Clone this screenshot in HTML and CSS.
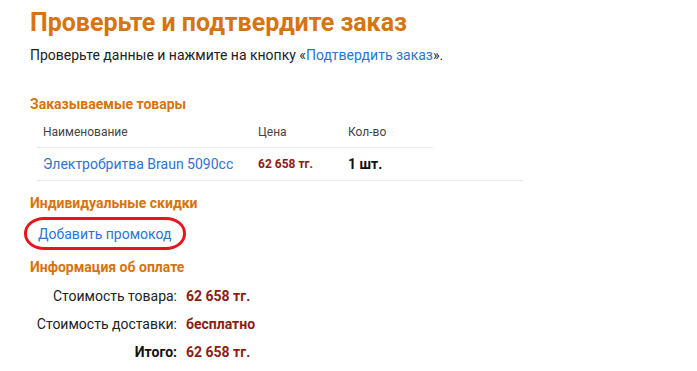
FILE: index.html
```html
<!DOCTYPE html>
<html lang="ru">
<head>
<meta charset="utf-8">
<link rel="stylesheet" href="styles.css">
</head>
<body>
<div class="page">
  <h1 class="title">Проверьте и подтвердите заказ</h1>
  <p class="intro">Проверьте данные и нажмите на кнопку «<a class="link" href="#">Подтвердить заказ</a>».</p>

  <h2 class="section">Заказываемые товары</h2>
  <div class="items">
    <div class="row head">
      <div class="c-name">Наименование</div>
      <div class="c-price">Цена</div>
      <div class="c-qty">Кол-во</div>
    </div>
    <div class="row item">
      <div class="c-name"><a class="link" href="#">Электробритва Braun 5090cc</a></div>
      <div class="c-price price">62 658 тг.</div>
      <div class="c-qty qty">1 шт.</div>
    </div>
  </div>

  <h2 class="section">Индивидуальные скидки</h2>
  <div class="promo"><a class="link" href="#">Добавить промокод</a></div>

  <h2 class="section">Информация об оплате</h2>
  <div class="pay">
    <div class="pay-label">Стоимость товара:</div><div class="pay-value">62 658 тг.</div>
    <div class="pay-label">Стоимость доставки:</div><div class="pay-value">бесплатно</div>
    <div class="pay-label total">Итого:</div><div class="pay-value">62 658 тг.</div>
  </div>
</div>
</body>
</html>
```

FILE: styles.css
```css
html, body {
  margin: 0;
  padding: 0;
  background: #ffffff;
}
body {
  font-family: Roboto, "Liberation Sans", sans-serif;
  color: #222222;
}
*, *::before, *::after {
  box-sizing: border-box;
}
.page {
  padding: 8px 0 0 30px;
}
.title {
  margin: 0;
  font-size: 25px;
  font-weight: 700;
  color: #d6740e;
  line-height: 30px;
}
.intro {
  margin: 9px 0 0 0;
  font-size: 14px;
  line-height: 16px;
}
.link {
  color: #2a76d2;
  text-decoration: none;
}
.section {
  margin: 0;
  font-size: 14px;
  font-weight: 700;
  color: #d6740e;
  line-height: 16px;
}
.intro + .section {
  margin-top: 33px;
}
.items {
  margin: 4px 0 0 7px;
  width: 486px;
}
.row {
  display: flex;
}
.head {
  width: 396px;
  height: 32px;
  align-items: center;
  border-bottom: 1px solid #ececec;
  font-size: 12px;
  color: #444444;
}
.item {
  height: 33px;
  align-items: center;
  border-bottom: 1px solid #ececec;
  font-size: 14px;
}
.c-name {
  width: 221px;
  padding-left: 6px;
}
.c-price {
  width: 90px;
}
.price {
  font-size: 12px;
  font-weight: 700;
  color: #8e1c12;
}
.qty {
  font-weight: 700;
  color: #111111;
}
.items + .section {
  margin-top: 14px;
}
.promo {
  margin: 6px 0 0 -6px;
  width: 162px;
  height: 33px;
  border: 3px solid #e8141c;
  border-radius: 20px / 16px;
  display: flex;
  align-items: center;
  padding-left: 11px;
  font-size: 14px;
}
.promo + .section {
  margin-top: 9px;
}
.pay {
  margin-top: 13px;
  display: grid;
  grid-template-columns: 147px auto;
  column-gap: 9px;
  row-gap: 12px;
  font-size: 14px;
  line-height: 16px;
}
.pay-label {
  text-align: right;
}
.pay-label.total {
  font-weight: 700;
  color: #111111;
}
.pay-value {
  font-weight: 700;
  color: #8e1c12;
}
```
